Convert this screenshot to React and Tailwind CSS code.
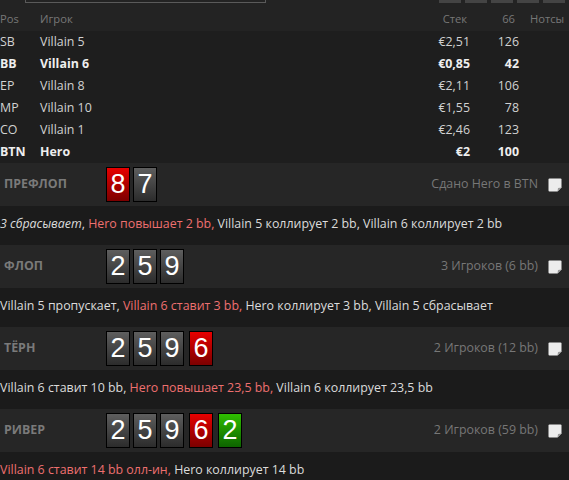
import React from 'react';

const players = [
  { pos: 'SB', name: 'Villain 5', stack: '€2,51', bb: '126' },
  { pos: 'BB', name: 'Villain 6', stack: '€0,85', bb: '42', bold: true },
  { pos: 'EP', name: 'Villain 8', stack: '€2,11', bb: '106' },
  { pos: 'MP', name: 'Villain 10', stack: '€1,55', bb: '78' },
  { pos: 'CO', name: 'Villain 1', stack: '€2,46', bb: '123' },
  { pos: 'BTN', name: 'Hero', stack: '€2', bb: '100', bold: true },
];

const cardColors = {
  gray: 'bg-linear-to-b from-[#5e5e5e] to-[#2c2c2c]',
  red: 'bg-linear-to-b from-[#e80000] to-[#7c0000]',
  green: 'bg-linear-to-b from-[#2fbf00] to-[#0d6400]',
};

const streets = [
  {
    name: 'Префлоп',
    cards: [{ v: '8', c: 'red' }, { v: '7', c: 'gray' }],
    info: 'Сдано Hero в BTN',
    actions: [
      { t: '3 сбрасывает', italic: true },
      { t: ', ' },
      { t: 'Hero повышает 2 bb,', red: true },
      { t: ' Villain 5 коллирует 2 bb, Villain 6 коллирует 2 bb' },
    ],
  },
  {
    name: 'Флоп',
    cards: [{ v: '2', c: 'gray' }, { v: '5', c: 'gray' }, { v: '9', c: 'gray' }],
    info: '3 Игроков (6 bb)',
    actions: [
      { t: 'Villain 5 пропускает, ' },
      { t: 'Villain 6 ставит 3 bb,', red: true },
      { t: ' Hero коллирует 3 bb, Villain 5 сбрасывает' },
    ],
  },
  {
    name: 'Тёрн',
    cards: [{ v: '2', c: 'gray' }, { v: '5', c: 'gray' }, { v: '9', c: 'gray' }, { v: '6', c: 'red', gap: true }],
    info: '2 Игроков (12 bb)',
    actions: [
      { t: 'Villain 6 ставит 10 bb, ' },
      { t: 'Hero повышает 23,5 bb,', red: true },
      { t: ' Villain 6 коллирует 23,5 bb' },
    ],
  },
  {
    name: 'Ривер',
    cards: [
      { v: '2', c: 'gray' }, { v: '5', c: 'gray' }, { v: '9', c: 'gray' },
      { v: '6', c: 'red', gap: true }, { v: '2', c: 'green', gap: true },
    ],
    info: '2 Игроков (59 bb)',
    actions: [
      { t: 'Villain 6 ставит 14 bb олл-ин,', red: true },
      { t: ' Hero коллирует 14 bb' },
    ],
  },
];

function NoteIcon() {
  return (
    <svg width="14" height="14" viewBox="0 0 14 14">
      <path d="M1.5 0.5 H12.5 Q13.5 0.5 13.5 1.5 V9.5 L9.5 13.5 H1.5 Q0.5 13.5 0.5 12.5 V1.5 Q0.5 0.5 1.5 0.5 Z" fill="#ececec" />
      <path d="M13.5 9.5 L10 10 L9.5 13.5 Z" fill="#9a9a9a" />
    </svg>
  );
}

function Card({ v, c, gap }) {
  return (
    <div
      className={`w-[24px] h-[35px] border border-black flex items-center justify-center text-white text-[27px] leading-none ${cardColors[c]} ${gap ? 'ml-[5px]' : 'ml-[3px] first:ml-0'}`}
      style={{ fontFamily: '"Liberation Sans", Arial, sans-serif' }}
    >
      {v}
    </div>
  );
}

export default function App() {
  return (
    <div
      className="w-[569px] h-[480px] overflow-hidden bg-[#1e1e1e] text-[12.4px] text-[#d2d2d2]"
      style={{ fontFamily: '"Open Sans", "Noto Sans", sans-serif' }}
    >
      {/* top strip + header */}
      <div className="bg-[#232323] h-[31px] flex flex-col">
        <div className="h-[8px] flex justify-between">
          <div className="ml-[25px] w-[241px] h-[3px] border-x border-b border-[#5a5a5a]" />
          <div className="flex gap-[4px] pr-[4px]">
            {[0, 1, 2, 3, 4].map(i => (
              <div key={i} className="w-[22px] h-[3px] bg-[#444]" />
            ))}
          </div>
        </div>
        <div className="flex items-center h-[22px] text-[11.2px] text-[#777]">
          <div className="w-[40px]">Pos</div>
          <div className="flex-1">Игрок</div>
          <div className="w-[60px] text-right pr-[3px]">Стек</div>
          <div className="w-[49px] text-right pr-[4px]">66</div>
          <div className="w-[50px] pl-[11px]">Нотсы</div>
        </div>
      </div>

      {/* players */}
      <div>
        {players.map(p => (
          <div
            key={p.pos}
            className={`flex items-center h-[22px] ${p.bold ? 'font-bold text-[#eeeeee]' : ''}`}
          >
            <div className="w-[40px]">{p.pos}</div>
            <div className="flex-1">{p.name}</div>
            <div className="w-[60px] text-right">{p.stack}</div>
            <div className="w-[49px] text-right">{p.bb}</div>
            <div className="w-[50px]" />
          </div>
        ))}
      </div>

      {/* streets */}
      {streets.map(s => (
        <div key={s.name}>
          <div className="h-[43px] bg-[#262626] flex items-center">
            <div className="w-[106px] pl-[4px] font-bold uppercase text-[#7a7a7a]">{s.name}</div>
            <div className="flex">
              {s.cards.map((c, i) => (
                <Card key={i} {...c} />
              ))}
            </div>
            <div className="flex-1 text-right text-[#777]">{s.info}</div>
            <div className="ml-[10px] mr-[7px] flex">
              <NoteIcon />
            </div>
          </div>
          <div className="bg-[#1b1b1b] h-[39px] pt-[9px] whitespace-nowrap text-[#dcdcdc]">
            {s.actions.map((a, i) => (
              <span
                key={i}
                className={`${a.red ? 'text-[#ee7070]' : ''} ${a.italic ? 'italic' : ''}`}
              >
                {a.t}
              </span>
            ))}
          </div>
        </div>
      ))}
    </div>
  );
}
